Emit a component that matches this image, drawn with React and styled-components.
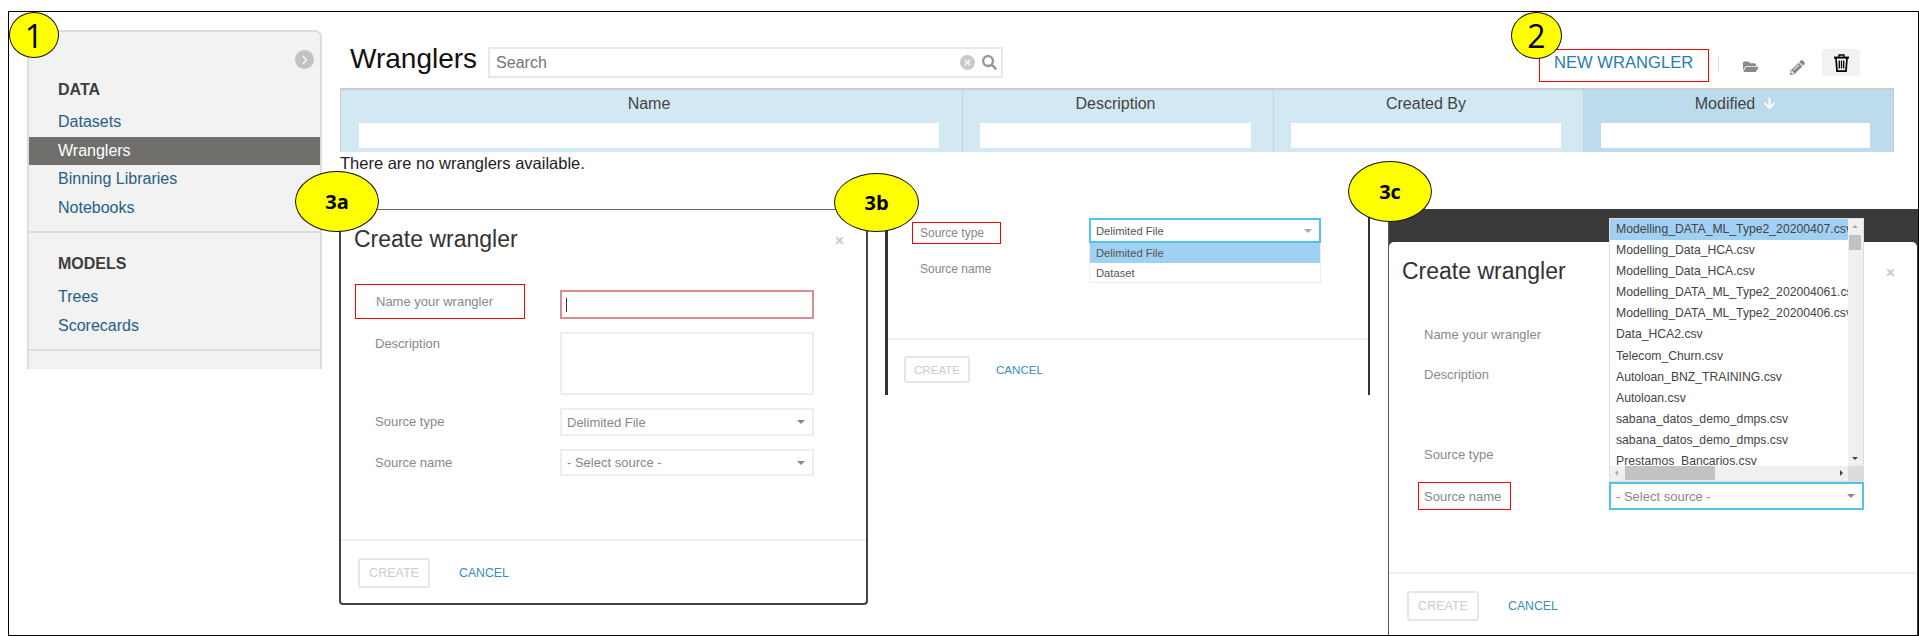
import React from 'react';
import styled, { createGlobalStyle } from 'styled-components';
import { FaFolderOpen, FaPencilAlt, FaChevronRight, FaTimes, FaSearch, FaArrowDown } from 'react-icons/fa';

const GlobalStyle = createGlobalStyle`
  html, body { margin: 0; padding: 0; background: #fff; }
  body { width: 1919px; height: 636px; overflow: hidden; font-family: "Liberation Sans", Arial, sans-serif; }
  * { box-sizing: border-box; }
`;

const Frame = styled.div`
  position: relative;
  margin: 11px 0 0 8px;
  width: 1911px;
  height: 625px;
  border: 1px solid #000;
  display: flex;
  align-items: flex-start;
  padding: 18px 0 0 18px;
  gap: 18px;
  overflow: hidden;
`;

const Callout = styled.div`
  position: absolute;
  left: ${({ $x }) => $x}px;
  top: ${({ $y }) => $y}px;
  width: ${({ $w }) => $w}px;
  height: ${({ $h }) => $h}px;
  border-radius: 50%;
  border: 1px solid #111;
  background: #ffff00;
  color: #000;
  display: flex;
  align-items: center;
  justify-content: center;
  font-family: "Open Sans", "Noto Sans", sans-serif;
  font-size: ${({ $size }) => $size || 22}px;
  font-weight: ${({ $bold }) => ($bold ? 700 : 400)};
  z-index: 10;
`;

const RedBox = styled.div`
  border: 1px solid #f00;
  display: flex;
  align-items: center;
`;

/* sidebar */
const Sidebar = styled.nav`
  width: 295px;
  height: 339px;
  flex-shrink: 0;
  background: #f2f2f2;
  border: 2px solid #ddd;
  border-bottom: 0;
  border-radius: 0 7px 0 0;
  position: relative;
`;

const CollapseBtn = styled.span`
  position: absolute;
  right: 6px;
  top: 18px;
  width: 19px;
  height: 19px;
  border-radius: 50%;
  background: #c2c2c2;
  color: #f2f2f2;
  display: flex;
  align-items: center;
  justify-content: center;
  font-size: 10px;
`;

const NavGroup = styled.div`
  padding-top: ${({ $pt }) => $pt}px;
  height: ${({ $h }) => $h}px;
  border-bottom: 2px solid #ddd;
`;

const GroupTitle = styled.div`
  font-size: 16px;
  font-weight: 700;
  color: #3d3d3d;
  line-height: 20px;
  padding-left: 29px;
  margin-bottom: ${({ $mb }) => $mb}px;
`;

const NavItem = styled.div`
  height: 28.5px;
  line-height: 28px;
  padding-left: 29px;
  font-size: 16px;
  color: ${({ $active }) => ($active ? '#fff' : '#1f5f85')};
  background: ${({ $active }) => ($active ? '#716f6c' : 'transparent')};
`;

/* main column */
const Main = styled.main`
  flex: 1;
  min-width: 0;
`;

const TopBar = styled.div`
  display: flex;
  align-items: flex-start;
  height: 58px;
  padding: 17px 58px 0 10px;
`;

const Title = styled.h1`
  margin: -3px 11px 0 0;
  font-size: 28px;
  font-weight: 400;
  line-height: 30px;
  color: #111;
`;

const SearchBox = styled.div`
  width: 515px;
  height: 31px;
  border: 2px solid #e8e8e8;
  display: flex;
  align-items: center;
  padding: 0 4px 0 6px;
  font-size: 16px;
  color: #757575;
`;

const SearchText = styled.span`flex: 1;`;

const ClearIcon = styled.span`
  width: 15px;
  height: 15px;
  border-radius: 50%;
  background: #c9c9c9;
  color: #f4f4f4;
  display: flex;
  align-items: center;
  justify-content: center;
  font-size: 9px;
  margin-right: 7px;
`;

const SearchIcon = styled.span`
  color: #999;
  display: flex;
  font-size: 15px;
`;

const Actions = styled.div`
  margin-left: auto;
  display: flex;
  align-items: center;
  height: 33px;
  margin-top: 2px;
`;

const NewButton = styled(RedBox)`
  width: 170px;
  height: 33px;
  padding: 0 0 5px 14px;
  font-size: 16.6px;
  color: #2a7cb0;
  white-space: nowrap;
`;

const Sep = styled.span`
  width: 1px;
  height: 16px;
  background: #ddd;
  margin: 0 24px 3px 9px;
`;

const ToolIcon = styled.span`
  color: #8a8a8a;
  display: flex;
  width: ${({ $w }) => $w}px;
  font-size: ${({ $size }) => $size}px;
  margin: 3px ${({ $mr }) => $mr}px 0 0;
`;

const TrashButton = styled.span`
  width: 38px;
  height: 27px;
  border-radius: 4px;
  background: #f2f2f2;
  display: flex;
  align-items: center;
  justify-content: center;
  margin-bottom: 6px;
`;

const TableHead = styled.div`
  display: grid;
  grid-template-columns: 621px 311px 310px 310px;
  width: 1554px;
  height: 64px;
  border-top: 2px solid #ccc;
  border-left: 1px solid #ccc;
  border-right: 1px solid #ccc;
`;

const HeadCell = styled.div`
  background: ${({ $sorted }) => ($sorted ? '#bcdcee' : '#d2e8f3')};
  border-left: ${({ $first }) => ($first ? '0' : '1px solid #c4d4dc')};
  padding: 0 ${({ $pr }) => $pr}px 0 ${({ $pl }) => $pl}px;
  text-align: center;
  color: #444;
  font-size: 16px;
`;

const HeadLabel = styled.div`
  height: 33px;
  display: flex;
  align-items: center;
  justify-content: center;
  gap: 8px;
  padding-bottom: 6px;
`;

const SortArrow = styled.span`
  color: #fff;
  display: flex;
  font-size: 13px;
`;

const Filter = styled.div`
  height: 25px;
  background: #fff;
`;

const EmptyNote = styled.p`
  margin: 2px 0 0;
  font-size: 16.5px;
  line-height: 18px;
  color: #222;
`;

/* the three dialog captures */
const Shots = styled.div`
  display: flex;
  align-items: flex-start;
  margin: 37px 0 0 -1px;
`;

const Dialog = styled.section`
  position: relative;
  width: 529px;
  height: 396px;
  flex-shrink: 0;
  background: #fff;
  border: 2px solid #444;
  border-top: 1px solid #666;
  border-radius: 0 0 4px 4px;
  padding-top: 16px;
`;

const CropDialog = styled.section`
  position: relative;
  width: 485px;
  height: 186px;
  flex-shrink: 0;
  margin-left: 17px;
  background: #fff;
  border-left: 3px solid #333;
  border-right: 2px solid #333;
  padding-top: 9px;
`;

const DarkDialog = styled.section`
  position: relative;
  width: 530px;
  height: 430px;
  flex-shrink: 0;
  margin-left: 18px;
  background: #3a3a3a;
  border-left: 1px solid #555;
  padding-top: 33px;
`;

const DarkSheet = styled.div`
  position: relative;
  background: #fff;
  height: 397px;
  width: 528px;
  border-radius: 5px 5px 0 0;
  padding-top: 16px;
`;

const DialogTitle = styled.h2`
  margin: 0 0 0 ${({ $left }) => $left}px;
  font-size: 23px;
  font-weight: 400;
  line-height: 26px;
  color: #333;
`;

const Close = styled.span`
  position: absolute;
  top: ${({ $top }) => $top}px;
  right: ${({ $right }) => $right}px;
  color: #ccc;
  display: flex;
  font-size: 11px;
`;

const Form = styled.div`
  display: grid;
  grid-template-columns: ${({ $label }) => $label}px ${({ $field }) => $field}px;
  grid-template-rows: ${({ $rows }) => $rows};
  align-content: start;
  row-gap: 13px;
  padding-left: ${({ $left }) => $left}px;
  padding-top: ${({ $top }) => $top}px;
  height: ${({ $h }) => $h}px;
`;

const Label = styled.div`
  font-size: ${({ $small }) => ($small ? 12 : 13)}px;
  line-height: ${({ $line }) => $line || 28}px;
  padding-left: ${({ $pad }) => $pad}px;
  color: #888;
  white-space: nowrap;
`;

const MarkedLabel = styled(RedBox)`
  font-size: ${({ $small }) => ($small ? 12 : 13)}px;
  color: #888;
  white-space: nowrap;
  margin: ${({ $m }) => $m};
  padding-left: ${({ $pl }) => $pl}px;
  height: ${({ $h }) => $h}px;
  width: ${({ $w }) => ($w ? `${$w}px` : 'auto')};
`;

const NameInput = styled.div`
  height: 29px;
  border: 2px solid #e08a92;
  display: flex;
  align-items: center;
  padding-left: 4px;
`;

const Caret = styled.span`
  width: 1px;
  height: 14px;
  background: #333;
`;

const TextArea = styled.div`
  height: 63px;
  border: 2px solid #eee;
`;

const Select = styled.div`
  position: relative;
  border: 2px solid ${({ $open }) => ($open ? '#4fc3e8' : '#eee')};
  display: flex;
  align-items: center;
  justify-content: space-between;
  padding: 0 7px 0 5px;
  font-size: ${({ $small }) => ($small ? 11.2 : 13)}px;
  color: ${({ $dark }) => ($dark ? '#555' : '#888')};
`;

const Arrow = styled.span`
  width: 0;
  height: 0;
  border-left: 4px solid transparent;
  border-right: 4px solid transparent;
  border-top: 4px solid ${({ $light }) => ($light ? '#aaa' : '#888')};
`;

const Footer = styled.div`
  border-top: 2px solid #eee;
  display: flex;
  align-items: center;
  height: ${({ $h }) => $h}px;
  padding: ${({ $pt }) => $pt}px 0 0 ${({ $left }) => $left}px;
`;

const CreateButton = styled.div`
  width: ${({ $small }) => ($small ? 66 : 72)}px;
  height: ${({ $small }) => ($small ? 27 : 30)}px;
  border: 2px solid #e6e6e6;
  border-radius: 3px;
  color: #ccc;
  font-size: ${({ $small }) => ($small ? 11.6 : 12.5)}px;
  display: flex;
  align-items: center;
  justify-content: center;
`;

const CancelLink = styled.span`
  margin-left: ${({ $gap }) => $gap}px;
  color: #3a8cc0;
  font-size: ${({ $small }) => ($small ? 11.6 : 12.3)}px;
`;

/* open menus */
const TypeMenu = styled.div`
  position: absolute;
  left: -2px;
  right: -2px;
  top: 23px;
  background: #fff;
  border: 1px solid #eee;
  border-top: 0;
  z-index: 2;
`;

const TypeOption = styled.div`
  height: ${({ $active }) => ($active ? 20 : 19)}px;
  line-height: 21px;
  padding-left: 6px;
  font-size: 11.2px;
  color: #555;
  background: ${({ $active }) => ($active ? '#a0d0f2' : '#fff')};
`;

const SourceMenu = styled.div`
  position: absolute;
  left: -2px;
  right: -2px;
  bottom: 26px;
  height: 264px;
  background: #fff;
  border: 1px solid #ddd;
  z-index: 2;
  display: grid;
  grid-template-columns: 1fr 15px;
  grid-template-rows: 1fr 15px;
`;

const SourceList = styled.div`
  overflow: hidden;
  min-width: 0;
`;

const SourceOption = styled.div`
  height: 21.1px;
  line-height: 21px;
  padding-left: 6px;
  font-size: 12.2px;
  color: #444;
  white-space: nowrap;
  overflow: hidden;
  background: ${({ $active }) => ($active ? '#a0d0f2' : '#fff')};
`;

const Track = styled.div`
  position: relative;
  background: #f0f0f0;
`;

const Thumb = styled.span`
  position: absolute;
  background: #c2c2c2;
  left: ${({ $l }) => $l}px;
  top: ${({ $t }) => $t}px;
  width: ${({ $w }) => $w}px;
  height: ${({ $h }) => $h}px;
`;

const ScrollArrow = styled.span`
  position: absolute;
  left: ${({ $l }) => $l}px;
  top: ${({ $t }) => $t}px;
  width: 0;
  height: 0;
  border: 3.5px solid transparent;
  ${({ $dir, $c }) => `border-${$dir}-color: ${$c};`}
`;

const Corner = styled.div`background: #dcdcdc;`;

const sources = [
  'Modelling_DATA_ML_Type2_20200407.csv',
  'Modelling_Data_HCA.csv',
  'Modelling_Data_HCA.csv',
  'Modelling_DATA_ML_Type2_202004061.csv',
  'Modelling_DATA_ML_Type2_20200406.csv',
  'Data_HCA2.csv',
  'Telecom_Churn.csv',
  'Autoloan_BNZ_TRAINING.csv',
  'Autoloan.csv',
  'sabana_datos_demo_dmps.csv',
  'sabana_datos_demo_dmps.csv',
  'Prestamos_Bancarios.csv',
];

const columns = [
  { name: 'Name', pl: 18, pr: 23, first: true },
  { name: 'Description', pl: 17, pr: 22 },
  { name: 'Created By', pl: 17, pr: 22 },
  { name: 'Modified', pl: 17, pr: 23, sorted: true },
];

const TrashIcon = () => (
  <svg width="15" height="18" viewBox="0 0 15 18" fill="none" stroke="#000" strokeWidth="1.7">
    <path d="M5 3V1H10V3" strokeWidth="1.3" />
    <path d="M0 3.6H15" strokeWidth="2" />
    <path d="M2 4L3 17.1H12L13 4" />
    <path d="M5.3 6.5V14.5M7.5 6.5V14.5M9.7 6.5V14.5" strokeWidth="1.3" />
  </svg>
);

const App = () => (
  <>
    <GlobalStyle />
    <Frame>
      <Callout $x={0} $y={0} $w={50} $h={46} $size={32}>1</Callout>
      <Callout $x={1502} $y={0} $w={51} $h={47} $size={32}>2</Callout>
      <Callout $x={286} $y={159} $w={84} $h={61} $size={20} $bold>3a</Callout>
      <Callout $x={825} $y={161} $w={85} $h={59} $size={20} $bold>3b</Callout>
      <Callout $x={1339} $y={149} $w={84} $h={61} $size={20} $bold>3c</Callout>

      <Sidebar>
        <CollapseBtn><FaChevronRight /></CollapseBtn>
        <NavGroup $pt={48} $h={201}>
          <GroupTitle $mb={8}>DATA</GroupTitle>
          <NavItem>Datasets</NavItem>
          <NavItem $active>Wranglers</NavItem>
          <NavItem>Binning Libraries</NavItem>
          <NavItem>Notebooks</NavItem>
        </NavGroup>
        <NavGroup $pt={21} $h={118}>
          <GroupTitle $mb={9}>MODELS</GroupTitle>
          <NavItem>Trees</NavItem>
          <NavItem>Scorecards</NavItem>
        </NavGroup>
      </Sidebar>

      <Main>
        <TopBar>
          <Title>Wranglers</Title>
          <SearchBox>
            <SearchText>Search</SearchText>
            <ClearIcon><FaTimes /></ClearIcon>
            <SearchIcon><FaSearch /></SearchIcon>
          </SearchBox>
          <Actions>
            <NewButton>NEW WRANGLER</NewButton>
            <Sep />
            <ToolIcon $w={17} $size={15.5} $mr={30}><FaFolderOpen /></ToolIcon>
            <ToolIcon $w={15} $size={15} $mr={17}><FaPencilAlt /></ToolIcon>
            <TrashButton><TrashIcon /></TrashButton>
          </Actions>
        </TopBar>

        <TableHead>
          {columns.map((col) => (
            <HeadCell key={col.name} $first={col.first} $sorted={col.sorted} $pl={col.pl} $pr={col.pr}>
              <HeadLabel>
                {col.name}
                {col.sorted && <SortArrow><FaArrowDown /></SortArrow>}
              </HeadLabel>
              <Filter />
            </HeadCell>
          ))}
        </TableHead>
        <EmptyNote>There are no wranglers available.</EmptyNote>

        <Shots>
          <Dialog>
            <DialogTitle $left={13}>Create wrangler</DialogTitle>
            <Close $top={25} $right={21}><FaTimes /></Close>
            <Form $label={205} $field={254} $left={14} $top={38} $h={287} $rows="29px 63px 28px 27px">
              <MarkedLabel $m="-6px 35px 0 0" $pl={20} $h={35}>Name your wrangler</MarkedLabel>
              <NameInput><Caret /></NameInput>
              <Label $pad={20} $line={24}>Description</Label>
              <TextArea />
              <Label $pad={20}>Source type</Label>
              <Select>Delimited File<Arrow /></Select>
              <Label $pad={20}>Source name</Label>
              <Select>- Select source -<Arrow /></Select>
            </Form>
            <Footer $h={66} $pt={0} $left={17}>
              <CreateButton>CREATE</CreateButton>
              <CancelLink $gap={29}>CANCEL</CancelLink>
            </Footer>
          </Dialog>

          <CropDialog>
            <Form $label={201} $field={232} $left={0} $top={0} $h={120} $rows="25px 26px">
              <MarkedLabel $small $m="4px 0 0 24px" $pl={7} $h={22} $w={89}>Source type</MarkedLabel>
              <Select $small $open $dark>
                Delimited File<Arrow $light />
                <TypeMenu>
                  <TypeOption $active>Delimited File</TypeOption>
                  <TypeOption>Dataset</TypeOption>
                </TypeMenu>
              </Select>
              <Label $small $pad={32} $line={26}>Source name</Label>
            </Form>
            <Footer $h={57} $pt={3} $left={16}>
              <CreateButton $small>CREATE</CreateButton>
              <CancelLink $small $gap={26}>CANCEL</CancelLink>
            </Footer>
          </CropDialog>

          <DarkDialog>
            <DarkSheet>
              <DialogTitle $left={13}>Create wrangler</DialogTitle>
              <Close $top={25} $right={21}><FaTimes /></Close>
              <Form $label={220} $field={255} $left={0} $top={37} $h={288} $rows="29px 65px 28px 28px">
                <Label $pad={35}>Name your wrangler</Label>
                <div />
                <Label $pad={35} $line={24}>Description</Label>
                <div />
                <Label $pad={35}>Source type</Label>
                <div />
                <MarkedLabel $m="0 0 0 29px" $pl={5} $h={28} $w={93}>Source name</MarkedLabel>
                <Select $open>
                  - Select source -<Arrow />
                  <SourceMenu>
                    <SourceList>
                      {sources.map((file, i) => (
                        <SourceOption key={i} $active={i === 0}>{file}</SourceOption>
                      ))}
                    </SourceList>
                    <Track>
                      <ScrollArrow $dir="bottom" $c="#aaa" $l={4} $t={3} />
                      <Thumb $l={1} $t={16} $w={12} $h={15} />
                      <ScrollArrow $dir="top" $c="#444" $l={4} $t={238} />
                    </Track>
                    <Track>
                      <ScrollArrow $dir="right" $c="#aaa" $l={2} $t={4} />
                      <Thumb $l={15} $t={0} $w={90} $h={14} />
                      <ScrollArrow $dir="left" $c="#444" $l={230} $t={4} />
                    </Track>
                    <Corner />
                  </SourceMenu>
                </Select>
              </Form>
              <Footer $h={66} $pt={0} $left={18}>
                <CreateButton>CREATE</CreateButton>
                <CancelLink $gap={29}>CANCEL</CancelLink>
              </Footer>
            </DarkSheet>
          </DarkDialog>
        </Shots>
      </Main>
    </Frame>
  </>
);

export default App;
